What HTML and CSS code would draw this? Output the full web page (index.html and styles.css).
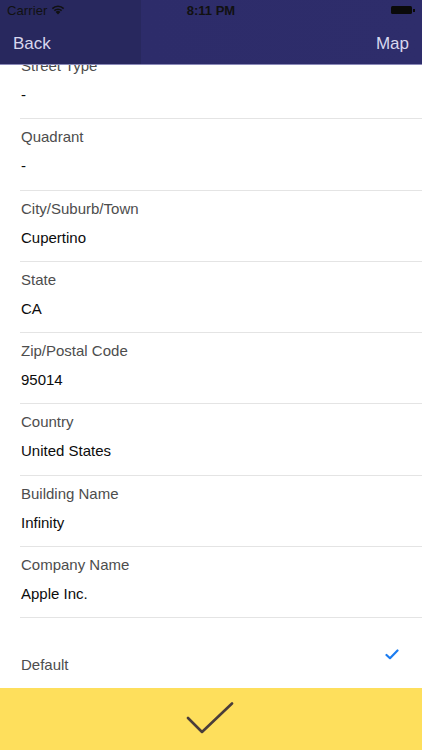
FILE: index.html
```html
<!DOCTYPE html>
<html>
<head>
<meta charset="utf-8">
<link rel="stylesheet" href="styles.css">
</head>
<body>
<div class="screen">
  <header class="header">
    <div class="status">
      <div class="status-left">
        <span class="carrier">Carrier</span>
        <svg class="wifi" width="14" height="10" viewBox="0 0 14 10">
          <path d="M7 9.5 L4.6 6.9 A3.5 3.5 0 0 1 9.4 6.9 Z" fill="#111"/>
          <path d="M2.8 5.1 A6 6 0 0 1 11.2 5.1 L10.1 6.2 A4.4 4.4 0 0 0 3.9 6.2 Z" fill="#111"/>
          <path d="M0.8 3.1 A8.8 8.8 0 0 1 13.2 3.1 L12.1 4.2 A7.2 7.2 0 0 0 1.9 4.2 Z" fill="#111"/>
        </svg>
      </div>
      <span class="time">8:11 PM</span>
      <div class="battery"><span class="battery-body"></span><span class="battery-tip"></span></div>
    </div>
    <nav class="nav">
      <span class="nav-btn">Back</span>
      <span class="nav-btn">Map</span>
    </nav>
  </header>
  <main class="content">
    <ul class="list">
      <li class="row"><span class="label">Street Type</span><span class="value">-</span></li>
      <li class="row"><span class="label">Quadrant</span><span class="value">-</span></li>
      <li class="row"><span class="label">City/Suburb/Town</span><span class="value">Cupertino</span></li>
      <li class="row"><span class="label">State</span><span class="value">CA</span></li>
      <li class="row"><span class="label">Zip/Postal Code</span><span class="value">95014</span></li>
      <li class="row"><span class="label">Country</span><span class="value">United States</span></li>
      <li class="row"><span class="label">Building Name</span><span class="value">Infinity</span></li>
      <li class="row"><span class="label">Company Name</span><span class="value">Apple Inc.</span></li>
      <li class="row row-default">
        <span class="label">Default</span>
        <svg class="tick" width="14" height="11" viewBox="0 0 14 11">
          <path d="M1.5 6 L5 9.2 L12.5 1.5" fill="none" stroke="#1b7cf0" stroke-width="2.2" stroke-linecap="round" stroke-linejoin="round"/>
        </svg>
      </li>
    </ul>
  </main>
  <footer class="footer">
    <svg class="big-tick" width="50" height="34" viewBox="0 0 50 34">
      <path d="M2 16 L16 30 L46 1.5" fill="none" stroke="#4a3d3a" stroke-width="2.6" stroke-linecap="round" stroke-linejoin="round"/>
    </svg>
  </footer>
</div>
</body>
</html>
```

FILE: styles.css
```css
* { box-sizing: border-box; }
html, body { margin: 0; padding: 0; }
body {
  font-family: "Liberation Sans", Arial, sans-serif;
  background: #fff;
}
.screen {
  width: 422px;
  height: 750px;
  display: flex;
  flex-direction: column;
  overflow: hidden;
}
.header {
  position: relative;
  z-index: 2;
  height: 65px;
  flex: none;
  background: linear-gradient(to right, #28285e 0, #28285e 141px, #2d2c6a 141px, #2e2d6b 100%);
  border-bottom: 1px solid #8a89b8;
}
.status {
  height: 20px;
  display: flex;
  align-items: center;
  justify-content: space-between;
  padding: 0 7px 0 7px;
  font-size: 13px;
  color: #111;
}
.status-left {
  width: 120px;
  display: flex;
  align-items: center;
  gap: 4px;
}
.carrier { letter-spacing: 0.1px; }
.time { font-weight: bold; font-size: 13px; }
.battery {
  width: 120px;
  display: flex;
  justify-content: flex-end;
  align-items: center;
}
.battery-body {
  width: 21px;
  height: 8px;
  background: #0a0a0a;
  border-radius: 1.5px;
}
.battery-tip {
  width: 1.5px;
  height: 3px;
  background: #0a0a0a;
  margin-left: 1px;
}
.nav {
  height: 44px;
  display: flex;
  align-items: center;
  justify-content: space-between;
  padding: 3px 13px 0 13px;
}
.nav-btn {
  font-size: 17px;
  color: #d8d7ee;
}
.content {
  flex: 1;
  overflow: hidden;
  position: relative;
}
.list {
  list-style: none;
  margin: -17px 0 0 20px;
  padding: 0;
}
.row {
  height: 71.3px;
  border-bottom: 1px solid #e4e4e4;
  padding: 9px 0 0 1px;
  display: flex;
  flex-direction: column;
}
.label {
  font-size: 15px;
  line-height: 18px;
  color: #4d4d4d;
}
.value {
  font-size: 15px;
  line-height: 18px;
  color: #0c0c0c;
  margin-top: 11px;
}
.row-default {
  border-bottom: none;
  flex-direction: row;
  justify-content: space-between;
  align-items: flex-start;
  padding: 38px 23px 0 1px;
}
.tick {
  margin-top: -7px;
}
.footer {
  height: 62px;
  flex: none;
  background: #fedf5c;
  display: flex;
  align-items: center;
  justify-content: center;
}
```
